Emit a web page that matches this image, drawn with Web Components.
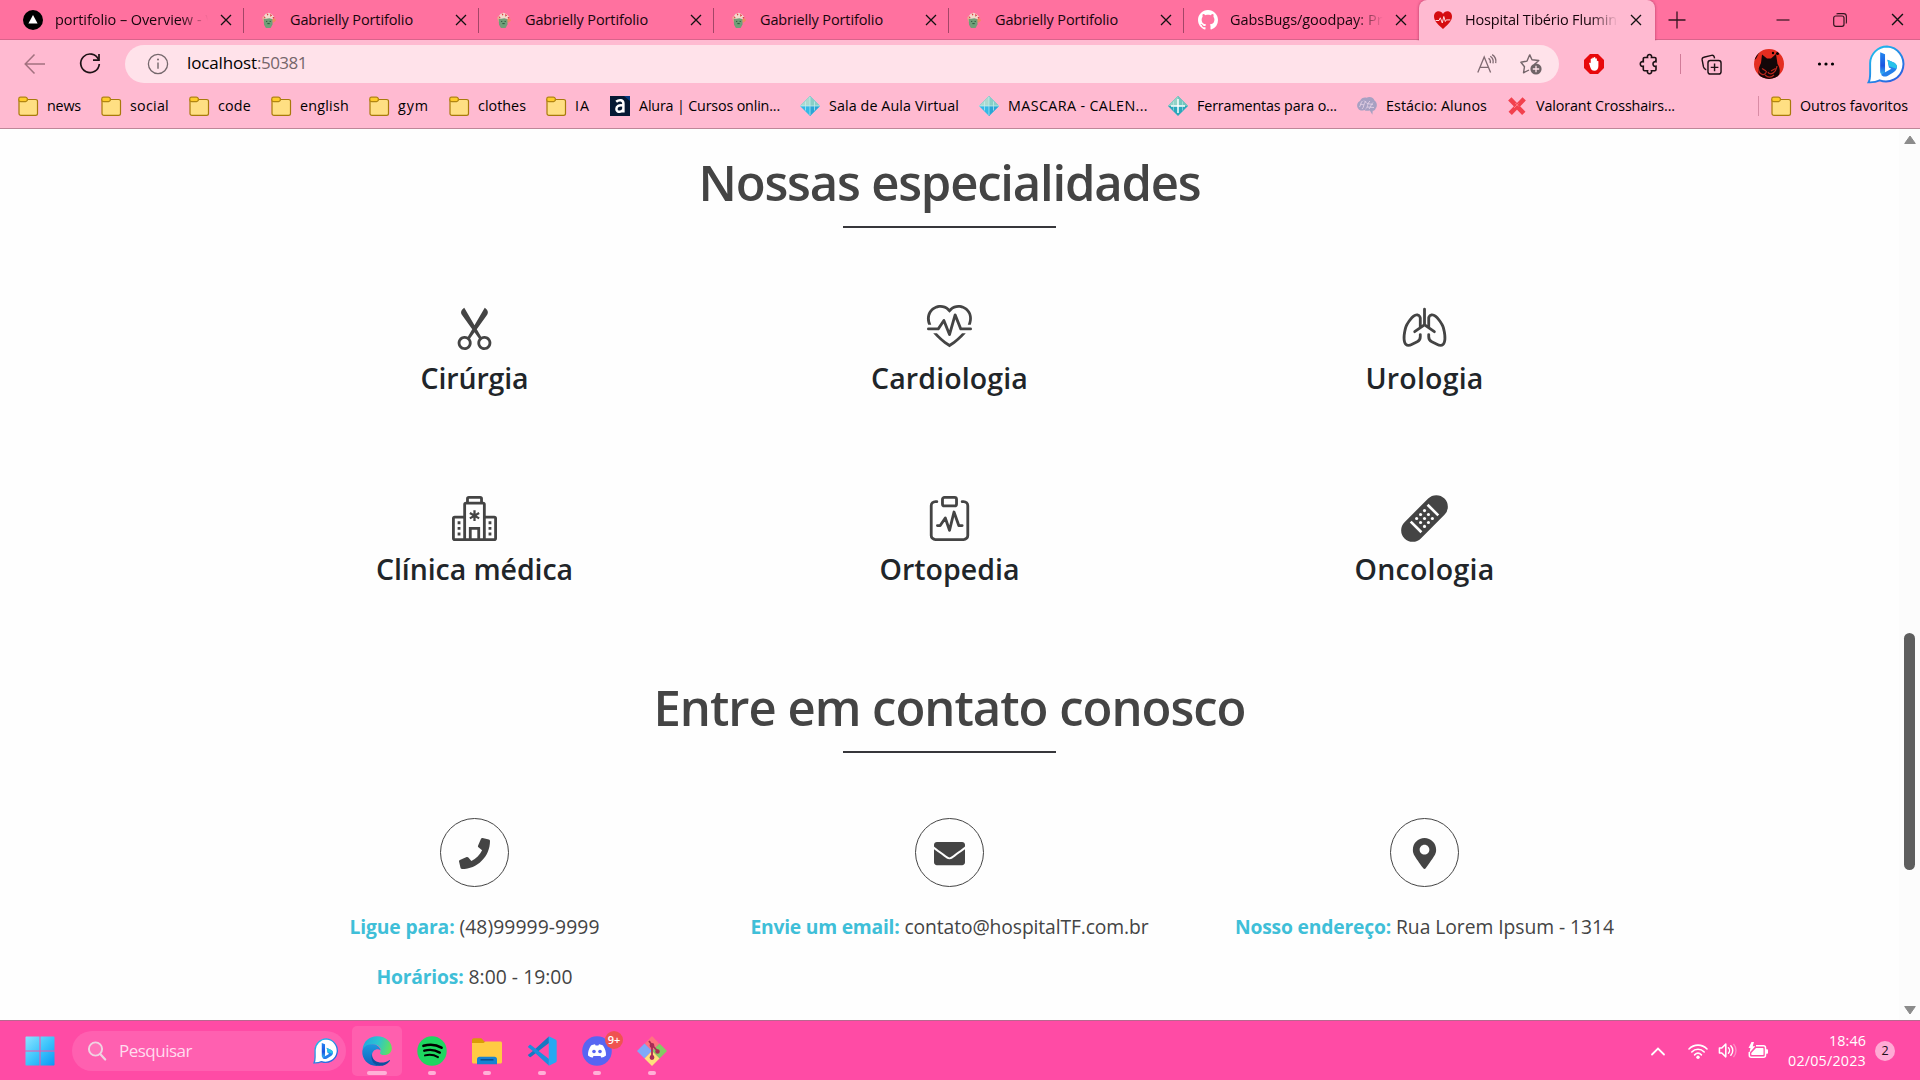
<!DOCTYPE html>
<html lang="pt-BR">
<head>
<meta charset="utf-8">
<title>Hospital Tibério Fluminense</title>
<style>
html,body{margin:0;height:100%;overflow:hidden;background:#fff}
body{font-family:"Open Sans","Noto Sans",sans-serif;color:#000}
</style>
</head>
<body>
<desktop-screen></desktop-screen>
<script>
const ICONS={
vercel:['0 0 20 20','<circle cx="10" cy="10" r="10" fill="#000"/><path d="M10 5l4.6 8.4H5.4z" fill="#fff"/>'],
cactus:['0 0 20 20','<path d="M3.4 7.5c0-2 2-2.200 2.300-.4l.4 2.400 2 .6-.2 2.400-3-.8z" fill="#e8a98c"/><path d="M5 8.500c2.500-1.500 7.500-1.500 9.500.2l-.3 5.600-2 3.600H7.300l-2-3.300z" fill="#6f9f78"/><path d="M14 8.500l2.800-.8 1 2.500-3.200 2.300z" fill="#ef8d5f"/><path d="M5 5.600l2-2.800 3.200-1 3.300 1.600 2.600 3.200-2 1.800-3.200-.8-3.200.5-2.600-.2z" fill="#f3d9cc"/><path d="M8 2.500l2 .6-1 2zM12 3l1.800 1.700-2 1.300zM5 5.500l2 1.200-1.200 1.200zM14 6.500l2.200-.3-.6 2z" fill="#d9363e"/><path d="M7.500 11h1.200M11.200 11h1.200M8.800 13.300h2.500" stroke="#244f38" stroke-width="1"/>'],
github:['0 0 16 16','<path fill="#fff" d="M8 0C3.580 0 0 3.580 0 8c0 3.540 2.290 6.530 5.470 7.590.4.070.55-.17.55-.38 0-.19-.01-.82-.01-1.490-2.010.37-2.530-.49-2.690-.94-.09-.23-.48-.94-.82-1.130-.28-.15-.68-.52-.01-.53.63-.01 1.080.58 1.230.82.72 1.210 1.870.87 2.330.66.070-.52.28-.87.51-1.070-1.780-.2-3.640-.89-3.640-3.950 0-.87.31-1.590.82-2.150-.08-.2-.36-1.020.08-2.120 0 0 .67-.21 2.200.82.64-.18 1.320-.27 2-.27s1.360.09 2 .27c1.530-1.040 2.200-.82 2.200-.82.44 1.100.16 1.920.08 2.120.51.56.82 1.270.82 2.150 0 3.070-1.870 3.750-3.650 3.950.29.25.54.73.54 1.480 0 1.070-.01 1.930-.01 2.200 0 .21.15.46.55.38A8.010 8.010 0 0 0 16 8c0-4.420-3.580-8-8-8z"/>'],
heartfav:['0 0 20 20','<path d="M10 19C3 13 1 10 1 6.300 1 .8 7.800-.6 10 4c2.200-4.600 9-3.200 9 2.300 0 3.700-2 6.700-9 12.700z" fill="#d50c10"/><path d="M2.500 10.500H6l1.300-2.700L9.300 13l1.500-6.500 1.500 5 1-1.600h4" fill="none" stroke="#ffd9dd" stroke-width="1"/>'],
close:['0 0 12 12','<path d="M1 1l10 10M11 1L1 11" fill="none" stroke="#111" stroke-width="1.300"/>'],
plus:['0 0 18 18','<path d="M9 .5v17M.5 9h17" stroke="#33141f" stroke-width="1.300"/>'],
min:['0 0 14 14','<path d="M.5 7h13" stroke="#33141f" stroke-width="1.200"/>'],
restore:['0 0 14 14','<rect x=".7" y="3" width="10.300" height="10.300" rx="2" fill="none" stroke="#33141f" stroke-width="1.200"/><path d="M3.500 1C4 .7 4.500.6 5 .6h5.500c1.700 0 2.900 1.200 2.900 2.900V9c0 .6-.1 1.100-.4 1.500" fill="none" stroke="#33141f" stroke-width="1.100"/>'],
back:['0 0 22 22','<path d="M21 11H1.500M10.500 1.500L1.200 11l9.300 9.500" fill="none" stroke="#a2717f" stroke-width="1.500"/>'],
reload:['0 0 22 22','<path d="M19.500 6.500A9.300 9.300 0 1 0 20.300 11" fill="none" stroke="#1d1115" stroke-width="1.700"/><path d="M20 1v6.200h-6" fill="none" stroke="#1d1115" stroke-width="1.700"/>'],
info:['0 0 22 22','<circle cx="11" cy="11" r="9.600" fill="none" stroke="#74676b" stroke-width="1.300"/><path d="M11 9.500v6.300" stroke="#74676b" stroke-width="1.400"/><circle cx="11" cy="6.500" r="1" fill="#74676b"/>'],
read:['0 0 20 20','<path d="M.8 18.500L7.200 3l6.400 15.500M3 13.300h8.500M11.500 4.200c1.700 1.200 2.200 3.200 1.800 5M13.300 2.200c2.400 1.600 3.300 4.300 2.700 7.200M15.200.6c3 2 4.200 5.200 3.500 8.500" fill="none" stroke="#806a72" stroke-width="1.300"/>'],
star:['0 0 22 22','<path d="M9.500 1.400l2.500 5.300 6.800.8-4.500 4M9 17l-5.500 2.800 1-6.100L.9 9.300 7 8.100l2.500-5.900" fill="none" stroke="#74656a" stroke-width="1.400" stroke-linejoin="round"/><circle cx="16" cy="16" r="5.600" fill="#6f6367"/><path d="M16 12.800v6.400M12.800 16h6.400" stroke="#ffe2ea" stroke-width="1.300"/>'],
hand:['0 0 20 20','<path d="M6 0h8l6 6v8l-6 6H6l-6-6V6z" fill="#e8090c"/><path d="M5.400 10.200c-1-1.300.6-2 1.300-1V5.300c0-1.100 1.400-1.100 1.500 0V4.200c.1-1.100 1.500-1.100 1.600 0v-.4c.1-1 1.500-1 1.600 0V5c.1-.9 1.400-.9 1.500 0v2.400c.1-1 1.400-1 1.500 0V12c0 3-1.500 4.700-4 4.700-2.200 0-3.200-1.200-4-3.300z" fill="#fff"/>'],
puzzle:['0 0 20 20','<path d="M5.500 3.500h3c-1-4 5-4 4 0h3.300c.8 0 1.200.5 1.200 1.200v3c-4-1-4 5.600 0 4.600v3.300c0 .7-.4 1.200-1.200 1.200h-3.300c1 4-5 4-4 0h-3c-.8 0-1.200-.5-1.200-1.200v-3.300c-4 1-4-5.600 0-4.600v-3c0-.7.400-1.200 1.200-1.200z" fill="none" stroke="#1d1115" stroke-width="1.600"/>'],
collections:['0 0 22 22','<path d="M5.500 16.500C3.500 16 3 15 2.600 13.500L1.200 6.200C1 4.600 1.600 3.700 3 3.400l8-2c1.600-.3 2.500.3 2.900 1.800l.3 1.300" fill="none" stroke="#1d1115" stroke-width="1.500"/><rect x="7.300" y="6.800" width="13.700" height="14.200" rx="2.500" fill="none" stroke="#1d1115" stroke-width="1.500"/><path d="M14.200 10v8M10.200 14h8" stroke="#1d1115" stroke-width="1.500"/>'],
avatar:['0 0 30 30','<defs><clipPath id="a"><circle cx="15" cy="15" r="15"/></clipPath></defs><g clip-path="url(#a)"><path fill="#e42d20" d="M0 0h30v30H0z"/><path d="M0 11c3-1 3-4 5-7l2-4H0zM8 5.500l5 4h4l5-4.500 1.500 10C27 20 26 25 23 30H7C3 25 4 20 7 14z" fill="#130608"/><path d="M4.500 19c0 7 7 9 8 3M14 23c2 4 8 1 9-6M8 19.500l4 2.500M21.500 19.500L17 22M11 26c3 3 6 3 9 0" fill="none" stroke="#b9261d" stroke-width="1.200"/><circle cx="19" cy="4" r="1.200"/><circle cx="23.500" cy="4.500" r="1.500"/></g>'],
dots:['0 0 18 18','<circle cx="2.500" cy="9" r="1.600"/><circle cx="9" cy="9" r="1.600"/><circle cx="15.500" cy="9" r="1.600"/>'],
bing:['0 0 40 40','<defs><linearGradient id="b" x1="0" y1="0" x2=".8" y2="1"><stop stop-color="#1cc8ee"/><stop offset="1" stop-color="#2b5ce0"/></linearGradient><linearGradient id="b2" x1="0" y1="0" x2="0" y2="1"><stop stop-color="#2287f0"/><stop offset=".6" stop-color="#1b55e0"/><stop offset="1" stop-color="#35b9f5"/></linearGradient></defs><path d="M20.500 1.500A18 18 0 1 1 13 36.300c-3.500 1.700-7 2.200-11.400 2 1.500-2.500 1.600-5 1.600-9V18.500A17.500 17.500 0 0 1 20.500 1.500z" fill="#fff" stroke="url(#b)" stroke-width="2"/><path d="M13.500 7.500l5 2v19.500l-2 1.500c-1.700 0-3-1.300-3-3z" fill="url(#b2)"/><path d="M21 15l7 3.300c5 3 2.500 8.200-1.500 10.200l-5.500 3.300c-2.500 1.200-5.500.7-6.500-1.500l10.500-6-2.500-1.200z" fill="#247fea"/><path d="M21 15l7 3.300c2.500 1.500 3 4 2.300 6l-7.800-2.500z" fill="#27c3ea"/>'],
folder:['0 0 20 20','<path d="M3 3.500h14.500c1.200 0 2 .7 2 1.800v12.200c0 1.100-.8 1.900-2 1.900H3c-1.200 0-2-.8-2-1.900V3.500z" fill="#ffdf83" stroke="#a87a0b" stroke-width="1.200"/><path d="M2.500 1.200h4.800c1 0 1.700.5 2 1.300.5 1.500-.3 2.700-1.800 3.200H2.700C1.400 5.700.8 5 .8 4V2.800c0-1 .6-1.600 1.700-1.600z" fill="#ffcb2b" stroke="#b18512" stroke-width="1.200"/>'],
alura:['0 0 20 20','<path fill="#051933" d="M0 0h20v20H0z"/><path d="M14 0h6v5z" fill="#073a80"/><path d="M6.200 5.700c3-2.600 7.200-1.800 7.200 1.700v9M13 9.500c-4-.7-6.600.6-6.600 3.400 0 4.200 6.600 3.600 7-.4" fill="none" stroke="#fff" stroke-width="2.500"/>'],
gem:['0 0 20 20','<path d="M10 0l10 10-10 10L0 10z" fill="#34b9e6"/><path d="M10 0l10 10H0z" fill="#88cfc6"/><path d="M10 0v10H0z" fill="#aadad0"/><path d="M10 10h10L10 20z" fill="#2aa5d5"/><path d="M0 10h20M10 1v18M5.500 5.500v9M14.500 5.500v9" stroke="#c9f1f2" stroke-width=".9" opacity=".75"/>'],
gem2:['0 0 20 20','<path d="M10 0l10 10-10 10L0 10z" fill="#2ba7bb"/><path d="M10 0l10 10H0z" fill="#72c6bd"/><path d="M10 0v10H0z" fill="#93d2c6"/><path d="M3 10h14M10 3v14" stroke="#fff" stroke-width="1.500"/><path d="M5.500 5.500v9M14.500 5.500v9" stroke="#c9f1f2" stroke-width=".7" opacity=".7"/>'],
brain:['0 0 20 20','<path d="M1.500 13C-1 10 .3 6 3 5c1-3 4.500-4 6.500-3.200C13-.2 17 2 17.500 4.600c2.700 1.700 3.200 6 1 8.200-.4 1.500-1.500 2-2.800 2l-.3 4-2.600-4.300c-3 .7-4.700.2-5.400-.6-2.500 1-4.900.7-5.900-.9z" fill="#a7a0c2"/><path d="M2.500 11c2-3 1-4.500 3-6M5 13c2.500-2 1-5 4-8M8.500 13c3-2 1-5 4.500-8M12 13c2-1.500 1.500-4.500 4-6.500M3 8l4 1M7 4.500l3 3 6 1M10 11l7 .5" fill="none" stroke="#e2cfe4" stroke-width=".9"/>'],
valorant:['0 0 20 20','<path d="M2.800 2.800l14 14.600M17.200 2.800l-14 14.600" stroke="#f2404d" stroke-width="4.600"/><path d="M8.300 7l3.400 3.400M7 12l4.500-4.600" stroke="#ff8a93" stroke-width=".8"/>'],
up:['0 0 12 10','<path d="M6 1l5.300 7.500H.7z" fill="#8b8b8b" stroke="#8b8b8b" stroke-linejoin="round"/>'],
down:['0 0 12 10','<path d="M6 9L.7 1.500h10.600z" fill="#8b8b8b" stroke="#8b8b8b" stroke-linejoin="round"/>'],
scissors:['0 0 16 16','<path d="M3.500 3.500c-.614-.884-.074-1.962.858-2.500L8 7.226 11.642 1c.932.538 1.472 1.616.858 2.500L8.810 8.610l1.556 2.661a2.500 2.500 0 1 1-.794.637L8 9.730l-1.572 2.177a2.500 2.500 0 1 1-.794-.637L7.190 8.610 3.500 3.500zm2.500 10a1.500 1.500 0 1 0-3 0 1.500 1.500 0 0 0 3 0zm7 0a1.500 1.500 0 1 0-3 0 1.500 1.500 0 0 0 3 0z"/>'],
heart:['0 0 16 16','<path d="m8 2.748-.717-.737C5.600.281 2.514.878 1.400 3.053.918 3.995.78 5.323 1.508 7H.43c-2.128-5.697 4.165-8.830 7.394-5.857.06.055.119.112.176.171a3.120 3.120 0 0 1 .176-.17c3.230-2.974 9.522.159 7.394 5.856h-1.078c.728-1.677.59-3.005.108-3.947C13.486.878 10.400.28 8.717 2.010L8 2.748ZM2.212 10h1.315C4.593 11.183 6.050 12.458 8 13.795c1.949-1.337 3.407-2.612 4.473-3.795h1.315c-1.265 1.566-3.140 3.250-5.788 5-2.648-1.750-4.523-3.434-5.788-5Zm8.252-6.686a.5.5 0 0 0-.945.049L7.921 8.956 6.464 5.314a.5.5 0 0 0-.88-.091L3.732 8H.5a.5.5 0 0 0 0 1H4a.5.5 0 0 0 .416-.223l1.473-2.209 1.647 4.118a.5.5 0 0 0 .945-.049l1.598-5.593 1.457 3.642A.5.5 0 0 0 12 9h3.500a.5.5 0 0 0 0-1h-3.162l-1.874-4.686Z"/>'],
lungs:['0 0 16 16','<path d="M8.500 1.500a.5.5 0 1 0-1 0v5.243L7 7.100V4.720C7 3.770 6.230 3 5.280 3c-.524 0-1.023.27-1.443.592-.431.332-.847.773-1.216 1.229-.736.908-1.347 1.946-1.580 2.480-.176.405-.393 1.160-.556 2.011-.165.857-.283 1.857-.241 2.759.04.867.233 1.790.838 2.330.67.600 1.622.556 2.741-.004l1.795-.897A2.500 2.500 0 0 0 7 11.264V10.500a.5.5 0 0 0-1 0v.764a1.500 1.500 0 0 1-.83 1.342l-1.794.897c-.978.489-1.415.343-1.628.152-.28-.25-.467-.801-.505-1.630-.037-.795.068-1.710.224-2.525.157-.82.357-1.491.491-1.800.19-.438.75-1.400 1.440-2.250.342-.422.703-.799 1.049-1.065.358-.276.639-.385.833-.385a.72.72 0 0 1 .72.72v3.094l-1.790 1.280a.5.5 0 0 0 .58.813L8 7.614l3.210 2.293a.5.5 0 1 0 .58-.814L10 7.814V4.720a.72.72 0 0 1 .72-.72c.194 0 .475.11.833.385.346.266.706.643 1.050 1.066.688.85 1.248 1.811 1.439 2.249.134.309.334.98.491 1.800.156.814.26 1.730.224 2.525-.038.829-.224 1.380-.505 1.630-.213.19-.65.337-1.628-.152l-1.795-.897A1.500 1.500 0 0 1 10 11.264V10.500a.5.5 0 0 0-1 0v.764a2.500 2.500 0 0 0 1.382 2.236l1.795.897c1.120.56 2.070.603 2.741.004.605-.54.798-1.463.838-2.330.042-.902-.076-1.902-.24-2.759-.164-.852-.38-1.606-.558-2.012-.232-.533-.843-1.571-1.579-2.479-.37-.456-.785-.897-1.216-1.229C11.743 3.270 11.244 3 10.720 3 9.770 3 9 3.770 9 4.720V7.100l-.5-.357V1.500Z"/>'],
hospital:['0 0 16 16','<g fill="none" stroke="currentColor"><path d="M5.500 2V1c0-.3.200-.5.500-.5h4c.3 0 .5.200.5.500v1M4.500 15.500V3c0-.3.200-.5.500-.5h6c.3 0 .5.200.5.500v12.500M4.500 7.500H1c-.3 0-.5.200-.5.500v7c0 .3.200.5.500.5h14c.3 0 .5-.2.500-.5V8c0-.3-.2-.5-.5-.5h-3.500M6.500 15.500v-4h3v4M8 15.500"/><path d="M8 5.100v3.800M6.350 6.050l3.300 1.900M9.650 6.050l-3.300 1.900" stroke-width=".8"/></g><path d="M2 9h1v1H2zM2 11h1v1H2zM2 13h1v1H2zM13 9h1v1h-1zM13 11h1v1h-1zM13 13h1v1h-1z"/>'],
clipboard:['0 0 16 16','<g fill="none" stroke="currentColor" stroke-linecap="round" stroke-linejoin="round"><rect x="5.500" y=".5" width="5" height="3" rx=".7"/><path d="M3.500 2H3a1.500 1.500 0 0 0-1.500 1.500V14A1.500 1.500 0 0 0 3 15.500h10a1.500 1.500 0 0 0 1.500-1.500V3.500A1.500 1.500 0 0 0 13 2h-.5M3.700 10.500h1L6.500 7.800 8 12.200l1.600-6.500 1.700 4.800h1.200"/></g>'],
bandaid:['0 0 16 16','<path d="M.9 9.300a4 4 0 1 0 5.800 5.800l8.400-8.400A4 4 0 1 0 9.300.9z" transform="translate(0 0)"/><g stroke="#fff" stroke-width=".95"><path d="M9.100 3.100l3.800 3.800M3.100 9.100l3.800 3.800"/></g><g fill="#fff"><circle cx="8" cy="5.200" r=".55"/><circle cx="9.400" cy="6.600" r=".55"/><circle cx="10.800" cy="8" r=".55"/><circle cx="6.600" cy="6.600" r=".55"/><circle cx="8" cy="8" r=".55"/><circle cx="9.400" cy="9.400" r=".55"/><circle cx="5.200" cy="8" r=".55"/><circle cx="6.600" cy="9.400" r=".55"/><circle cx="8" cy="10.800" r=".55"/></g>'],
phone:['0 0 512 512','<path d="M493.400 24.600l-104-24c-11.300-2.600-22.900 3.300-27.500 13.900l-48 112c-4.200 9.800-1.400 21.300 6.900 28l60.600 49.600c-36 76.700-98.900 140.500-177.200 177.200l-49.600-60.600c-6.800-8.300-18.200-11.100-28-6.900l-112 48C3.900 366.500-2 378.100.6 389.400l24 104C27.100 504.200 36.700 512 48 512c256.100 0 464-207.500 464-464 0-11.200-7.700-20.900-18.600-23.400z"/>'],
mail:['0 0 512 512','<path d="M502.300 190.800c3.900-3.100 9.700-.2 9.700 4.700V400c0 26.500-21.500 48-48 48H48c-26.500 0-48-21.500-48-48V195.600c0-5 5.700-7.800 9.700-4.700 22.400 17.400 52.100 39.500 154.100 113.600 21.100 15.400 56.700 47.800 92.200 47.600 35.700.3 72-32.800 92.300-47.600 102-74.100 131.600-96.300 154-113.700zM256 320c23.200.4 56.600-29.200 73.400-41.400 132.700-96.300 142.800-104.700 173.400-128.700 5.800-4.500 9.200-11.500 9.200-18.900v-19c0-26.500-21.500-48-48-48H48c-26.500 0-48 21.500-48 48v19c0 7.400 3.400 14.300 9.200 18.900 30.600 23.900 40.700 32.400 173.400 128.700 16.800 12.200 50.200 41.800 73.400 41.400z"/>'],
pin:['-64 0 512 512','<path d="M172.268 501.670C26.970 291.031 0 269.413 0 192 0 85.961 85.961 0 192 0s192 85.961 192 192c0 77.413-26.970 99.031-172.268 309.670-9.535 13.774-29.930 13.773-39.464 0zM192 272c44.183 0 80-35.817 80-80s-35.817-80-80-80-80 35.817-80 80 35.817 80 80 80z"/>'],
windows:['0 0 30 30','<defs><linearGradient id="w" x1="0" y1="0" x2="1" y2="1"><stop stop-color="#8fe3ff"/><stop offset=".5" stop-color="#3ec5fb"/><stop offset="1" stop-color="#0c96f5"/></linearGradient></defs><path fill="url(#w)" d="M1.500.5h13v14H.500v-13c0-.6.400-1 1-1zM15.500.5h13c.6 0 1 .4 1 1v13h-14zM.5 15.500h14v14h-13c-.6 0-1-.4-1-1zM15.500 15.500h14v13c0 .6-.4 1-1 1h-13z"/>'],
search:['0 0 20 20','<circle cx="8.500" cy="8" r="6.600" fill="rgba(255,255,255,.12)" stroke="#efd3e2" stroke-width="1.900"/><path d="M13.200 13l5 5.500" stroke="#efd3e2" stroke-width="2.200" stroke-linecap="round"/>'],
edge:['0 0 30 30','<defs><linearGradient id="e1" x1="0" y1=".3" x2="1" y2=".5"><stop stop-color="#22a7de"/><stop offset=".5" stop-color="#2bc3d2"/><stop offset="1" stop-color="#62e25c"/></linearGradient><linearGradient id="e2" x1="0" y1="0" x2="0" y2="1"><stop stop-color="#1d98e0"/><stop offset="1" stop-color="#0f62bd"/></linearGradient></defs><path d="M.5 13.500C1.500 5 7.500.2 15 .2 24 .2 29.800 6 29.800 12c0 4.500-3.300 7-7.300 7-3.500 0-5-1.200-4.300-2.600C20 12 16.500 8.500 12 8.500 6.500 8.500 2 11 .5 13.500z" fill="url(#e1)"/><path d="M.3 15C.8 10.500 6 7.500 11.500 8.300c4 .5 7 3.600 7.100 6.200-2.500-2.500-8.600-1-8.600 5 0 5 4 9.500 9 9.500-2 .8-3 .9-4.500.9C6 29.800-.3 23 .3 15z" fill="url(#e2)"/><path d="M10 18c-.5 6 5 8.500 9.500 8.500 3 0 5.500-.8 7.800-2.300.5-.3.9.2.5.7C25 28.500 21 30 17.500 29.800 10 29 8.500 21.500 10 18z" fill="#0b509f"/>'],
spotify:['0 0 30 30','<circle cx="15" cy="15" r="14.700" fill="#1ed760"/><g fill="none" stroke="#000" stroke-linecap="round"><path d="M6.500 9.800c6-1.700 13-1.100 18 1.900" stroke-width="2.700"/><path d="M7.300 14.700c5.500-1.500 11-.8 15.500 1.900" stroke-width="2.400"/><path d="M8 19.400c4.500-1.200 9-.7 13 1.700" stroke-width="2"/></g>'],
explorer:['0 0 30 30','<path d="M0 4c0-1 .7-1.800 1.800-1.800h7.500L13 6v7H0z" fill="#d99c07"/><path d="M0 7h11.500l2-1.500h15c.9 0 1.500.6 1.500 1.500v19c0 .9-.6 1.500-1.500 1.500h-27C.6 27.500 0 26.900 0 26z" fill="#ffcb43"/><path d="M5 28.300v-5c0-1.500 1-2.500 2.500-2.500h15c1.500 0 2.500 1 2.500 2.500v5z" fill="#1683d2"/><path d="M8.500 23.800h13" stroke="#0b4f8c" stroke-width="1.500"/>'],
vscode:['0 0 30 30','<path d="M21.800.5L6.500 14.500.8 19l1.500 1.800c.5.500 1.200.5 1.800 0L22 7z" fill="#1579c2"/><path d="M21.800 29.500L6.500 15.500.8 11l1.500-1.800c.5-.5 1.200-.5 1.800 0L22 23z" fill="#1b8fdd"/><path d="M21.800.3l6.700 3.200c.8.300 1.200 1 1.200 1.800v19.400c0 .8-.4 1.500-1.200 1.800l-6.700 3.200z" fill="#28a8f2"/>'],
discord:['0 0 30 30','<circle cx="15" cy="15" r="14.800" fill="#5765f2"/><path d="M9 9.500c1.500-.7 2.500-1 4-1.200l.6 1.100h2.800l.6-1.100c1.500.2 2.500.5 4 1.200 2.200 3.300 3.200 6.500 3 10-1.500 1.200-2.900 1.800-4.500 2.200l-1-1.700h-7l-1 1.700C8.900 21.300 7.500 20.700 6 19.500c-.2-3.500.8-6.700 3-10z" fill="#fff"/><circle cx="12" cy="15.500" r="1.800" fill="#5765f2"/><circle cx="18" cy="15.500" r="1.800" fill="#5765f2"/>'],
git:['0 0 30 30','<path d="M15 0l7.200 7.500L15 15 7.800 7.500z" fill="#ff7480"/><path d="M7.500 7.500L15 15l-7.500 7.500L0 15z" fill="#7fa9f7"/><path d="M22.500 7.500L30 15l-7.500 7.500L15 15z" fill="#83cb63"/><path d="M15 15l7.500 7.500L15 30l-7.500-7.500z" fill="#ffe07d"/><g stroke="#a92d55" stroke-width="1.800" fill="#a92d55"><path d="M12 5l3 4v13M15 9l5.500 6" fill="none"/><circle cx="15" cy="9.500" r="1.500"/><circle cx="20.500" cy="15.500" r="1.400"/><circle cx="15" cy="21.500" r="1.500"/></g>'],
caret:['0 0 16 16','<path d="M2 11.500l6-6 6 6" fill="none" stroke="#fff" stroke-width="1.800" stroke-linecap="round"/>'],
wifi:['0 0 20 20','<g fill="none" stroke="#fff" stroke-width="1.600" stroke-linecap="round"><path d="M1 8c5-5.200 13-5.200 18 0M3.800 11c3.500-3.600 8.900-3.600 12.400 0M6.600 13.900c2-2 4.800-2 6.800 0"/></g><circle cx="10" cy="16.300" r="1.700" fill="#fff"/>'],
sound:['0 0 20 20','<path d="M1.500 7.300H4l4.200-4v13.400L4 12.700H1.500z" fill="none" stroke="#fff" stroke-width="1.600" stroke-linejoin="round"/><path d="M11 7.200c1.500 1.500 1.500 4.100 0 5.600M13.500 5c2.700 2.800 2.700 7.200 0 10" fill="none" stroke="#fff" stroke-width="1.500" stroke-linecap="round"/><path d="M16.300 3c3.500 4 3.500 10 0 14" fill="none" stroke="#fff" opacity=".35" stroke-width="1.500"/>'],
battery:['0 0 20 20','<path d="M8 4.700h7.500c1.200 0 2 .8 2 2v7.600c0 1.200-.8 2-2 2H3.300c-1.200 0-2-.8-2-2V11" fill="none" stroke="#fff" stroke-width="1.500"/><path d="M8 6.900h6.800c.4 0 .7.300.7.700v5.800c0 .4-.3.7-.7.7H4.200c-.5 0-.9-.4-.9-.9V12zM18 8.300h1.200c.5 0 .8.400.8.800v2.800c0 .4-.3.800-.8.800H18z" fill="#fff"/><path d="M3.500 1L.5 7h2L1.300 12 7.300 5.300H4.700L6 1z" fill="#fff"/>']
};
function comp(name,css,html,setup){
  customElements.define(name,class extends HTMLElement{
    connectedCallback(){
      if(this.shadowRoot)return;
      const r=this.attachShadow({mode:'open'});
      r.innerHTML='<style>:host{display:block;box-sizing:border-box}*{box-sizing:border-box}'+css+'</style>'+(typeof html==='function'?html(this):html);
      if(setup)setup(this,r);
    }
  });
}
const ic=(n,s)=>`<ui-icon name="${n}" size="${s}"></ui-icon>`;
const ft=(w,t)=>`<fit-text w="${w}">${t}</fit-text>`;

comp('ui-icon',':host{flex:none;display:block}svg{display:block;overflow:visible;fill:currentColor}',e=>{
  const s=e.getAttribute('size'),[v,b]=ICONS[e.getAttribute('name')];
  return `<svg width="${s}" height="${s}" viewBox="${v}">${b.replace(/^<path (?!.*fill)/,'<path ')}</svg>`;
});
comp('browser-tab',`:host{width:235px;height:39px;flex:none;display:flex;align-items:center;padding:1px 0 0 14px;font-size:14.500px;position:relative}
:host(:not([active]):not([nosep]))::after{content:"";position:absolute;right:0;top:8px;width:1px;height:25px;background:#a34667}
:host([active]){background:#ffbad1;height:41px;padding-bottom:2px;border-radius:8px 8px 0 0;width:236px;box-shadow:0 0 3px rgba(120,20,60,.6);clip-path:inset(-4px -4px 0 -4px)}
.i{width:20px;display:flex;justify-content:center}
.t{margin-left:12px;width:153px;overflow:hidden;white-space:nowrap;height:26px;line-height:26px;display:flex;gap:4px}
:host([fade]) .t{-webkit-mask-image:linear-gradient(90deg,#000 125px,transparent 153px)}
.c{margin-left:12px}`,e=>`<div class="i">${ic(e.getAttribute('icon'),e.getAttribute('is')||20)}</div><div class="t"><slot></slot></div><div class="c">${ic('close',12)}</div>`);
comp('tab-strip',`:host{height:40px;background:#ff719f;display:flex;padding-left:9px;border-bottom:1px solid #d9648b;color:#17060c}
.r{display:flex;align-items:center;height:39px;flex:1}
.p{margin-left:13px}.a{margin-left:90px}.b{margin-left:44px}.d{margin-left:51px}`,
`<browser-tab icon="vercel" fade>${ft(138,'portifolio – Overview')}<span>- V</span></browser-tab>`+
`<browser-tab icon="cactus" is="19">${ft(123,'Gabrielly Portifolio')}</browser-tab>`.repeat(4)+
`<browser-tab icon="github" nosep fade>${ft(134,'GabsBugs/goodpay:')}<span>Pro</span></browser-tab>
<browser-tab icon="heartfav" active fade>${ft(160,'Hospital Tibério Flumine')}</browser-tab>
<div class="r"><div class="p">${ic('plus',18)}</div><div class="a">${ic('min',14)}</div><div class="d" style="margin-left:43px">${ic('restore',14)}</div><div class="d" style="margin-left:44px">${ic('close',13)}</div></div>`);
comp('address-row',`:host{height:48px;display:flex;align-items:center;padding-left:24px}
.f{margin-left:24px;width:1434px;height:38px;border-radius:19px;background:#ffe2ea;display:flex;align-items:center;padding-left:22px;font-size:17px}
.u{margin-left:18px;display:flex;line-height:36px;height:38px}.g{color:#75666b;display:flex}
.s{width:1px;height:20px;background:#d17b98;margin:0 20px 0 21px}`,
`${ic('back',22)}<div style="width:33px"></div>${ic('reload',22)}<div class="f">${ic('info',22)}<div class="u">${ft(70,'localhost')}<span class="g">${ft(50,':50381')}</span></div><div style="width:1170px;flex:none"></div>${ic('read',20)}<div style="width:23px;flex:none"></div>${ic('star',22)}</div>
<div style="width:25px"></div>${ic('hand',20)}<div style="width:35px"></div>${ic('puzzle',20)}<div class="s"></div>${ic('collections',21)}<div style="width:32px"></div>${ic('avatar',30)}<div style="width:33px"></div>${ic('dots',18)}<div style="width:32px"></div>${ic('bing',39)}`);
comp('book-mark',`:host{display:flex;align-items:center;margin-right:20px;flex:none}.x{margin-left:9px;line-height:24px;white-space:nowrap}`,
 e=>`${ic(e.getAttribute('icon')||'folder',20)}<div class="x"><slot></slot></div>`);
const bm=(i,w,t)=>`<book-mark icon="${i}">${ft(w,t)}</book-mark>`;
comp('bookmark-bar',`:host{height:40px;display:flex;align-items:center;padding:0 0 4px 18px;font-size:14.300px}
.sp{flex:1}.s{width:1px;height:20px;background:#d98ca5;margin-right:12px}book-mark:last-of-type{margin-right:12px}`,
[['folder',34,'news'],['folder',39,'social'],['folder',33,'code'],['folder',49,'english'],['folder',31,'gym'],['folder',48,'clothes'],['folder',15,'IA'],['alura',141,'Alura | Cursos onlin...'],['gem',130,'Sala de Aula Virtual'],['gem',140,'MASCARA - CALEN...'],['gem2',140,'Ferramentas para o...'],['brain',101,'Estácio: Alunos'],['valorant',139,'Valorant Crosshairs...']].map(a=>bm(...a)).join('')+`<div class="sp"></div><div class="s"></div>`+bm('folder',108,'Outros favoritos'));
comp('browser-chrome',`:host{height:129px;background:#ffbad1;border-bottom:1px solid #bd8798;flex:none}`,`<tab-strip></tab-strip><address-row></address-row><bookmark-bar></bookmark-bar>`);

comp('section-title',`:host{display:flex;flex-direction:column;align-items:center;color:#444;font-size:49px;font-weight:600;line-height:60px}
hr{border:0;margin:14px 0 0;height:2px;width:213px;background:#37373b}`,`<slot></slot><hr>`);
comp('specialty-card',`:host{width:475px;height:191px;display:flex;flex-direction:column;align-items:center;color:#444}
.l{color:#212529;font-weight:600;font-size:28.500px;line-height:36px;margin-top:10px}`,e=>`${ic(e.getAttribute('icon'),45)}<div class="l"><slot></slot></div>`);
comp('contact-card',`:host{width:475px;display:flex;flex-direction:column;align-items:center;color:#444;font-size:19.300px}
.o{width:69px;height:69px;border:1px solid #444;border-radius:50%;display:flex;align-items:center;justify-content:center;margin-bottom:25px;padding-top:1px}`,
e=>`<div class="o">${ic(e.getAttribute('icon'),31)}</div><slot></slot>`);
comp('info-line',`:host{display:flex;gap:5px;height:30px;line-height:30px;margin-bottom:20px}::slotted([slot=k]){font-weight:700;color:#3fbfd8}`,`<slot name="k"></slot><slot></slot>`);
const sc=(i,w,t)=>`<specialty-card icon="${i}">${ft(w,t)}</specialty-card>`;
const il=(w,k,x,t)=>`<info-line><fit-text slot="k" w="${w}">${k}</fit-text>${ft(x,t)}</info-line>`;
comp('hospital-page',`:host{flex:1;background:#fefefe;padding-top:23px;height:891px;overflow:hidden}
.g{display:grid;grid-template-columns:repeat(3,475px);justify-content:center;padding-top:77px}
.c{padding-top:65px}.h{margin-top:-10px}`,
`<section-title>${ft(502,'Nossas especialidades')}</section-title>
<div class="g">${sc('scissors',108,'Cirúrgia')}${sc('heart',157,'Cardiologia')}${sc('lungs',118,'Urologia')}${sc('hospital',197,'Clínica médica')}${sc('clipboard',140,'Ortopedia')}${sc('bandaid',140,'Oncologia')}</div>
<section-title class="h">${ft(592,'Entre em contato conosco')}</section-title>
<div class="g c"><contact-card icon="phone">${il(105,'Ligue para:',140,'(48)99999-9999')}${il(87,'Horários:',104,'8:00 - 19:00')}</contact-card>
<contact-card icon="mail">${il(149,'Envie um email:',244,'contato@hospitalTF.com.br')}</contact-card>
<contact-card icon="pin">${il(156,'Nosso endereço:',218,'Rua Lorem Ipsum - 1314')}</contact-card></div>`);
comp('scroll-rail',`:host{width:21px;background:#fcfcfc;display:flex;flex-direction:column;align-items:center;padding:5px 0 4px}
.t{margin-top:487px;width:11px;height:237px;border-radius:6px;background:#5e5e5e}.s{flex:1}`,`${ic('up',12)}<div class="t"></div><div class="s"></div>${ic('down',12)}`);

comp('task-app',`:host{width:50px;height:50px;display:flex;flex-direction:column;align-items:center;padding-top:10px;position:relative;border-radius:5px}
:host([on]){background:#ff5fae}i{margin-top:5px;width:8px;height:4px;border-radius:2px;background:#ffb1d7}:host([on]) i{width:20px}
b{position:absolute;left:33px;top:5px;width:18px;height:18px;border-radius:9px;background:#ef5350;color:#fff;font:600 11px/17px "Open Sans",sans-serif;text-align:center}`,
e=>`${ic(e.getAttribute('icon'),30)}<i></i>${e.hasAttribute('badge')?`<b>${e.getAttribute('badge')}</b>`:''}`);
comp('task-bar',`:host{height:60px;flex:none;background:#ff4ba5;border-top:1px solid #b8688f;display:flex;align-items:center;padding-left:25px;color:#fff}
.q{margin-left:17px;width:274px;height:40px;border-radius:20px;background:#ff60b0;display:flex;align-items:center;padding:0 7px 0 15px;color:#ffdcee;font-size:17px}
.q fit-text{margin-left:12px;margin-right:auto;line-height:38px}.a{display:flex;gap:5px;margin-left:6px}
.y{margin-left:auto;display:flex;align-items:center}.k{width:85px;margin-left:13px;display:flex;flex-direction:column;align-items:flex-end;font-size:14.300px;line-height:20px}
.n{margin:0 25px 0 9px;width:20px;height:20px;border-radius:50%;background:#ffabd5;color:#20101a;font-size:12.500px;line-height:19px;text-align:center}`,
`${ic('windows',30)}<div class="q">${ic('search',20)}${ft(73,'Pesquisar')}${ic('bing',26)}</div>
<div class="a"><task-app icon="edge" on></task-app><task-app icon="spotify"></task-app><task-app icon="explorer"></task-app><task-app icon="vscode"></task-app><task-app icon="discord" badge="9+"></task-app><task-app icon="git"></task-app></div>
<div class="y">${ic('caret',16)}<div style="width:22px"></div>${ic('wifi',20)}<div style="width:10px"></div>${ic('sound',19)}<div style="width:11px"></div>${ic('battery',20)}<div class="k">${ft(37,'18:46')}${ft(78,'02/05/2023')}</div><div class="n">2</div></div>`);
comp('desktop-screen',`:host{width:1920px;height:1080px;display:flex;flex-direction:column;overflow:hidden}.m{flex:1;display:flex;min-height:0}`,`<browser-chrome></browser-chrome><div class="m"><hospital-page></hospital-page><scroll-rail></scroll-rail></div><task-bar></task-bar>`);
/* Text run whose tracking is set so that it fills the given advance width. */
comp('fit-text',`:host{display:block;flex:none;white-space:nowrap}span{display:inline-block}`,'<span><slot></slot></span>',(e,r)=>{
  const s=r.querySelector('span'),w=+e.getAttribute('w');
  e.style.width=w+'px';
  s.style.letterSpacing=((w-s.getBoundingClientRect().width)/e.textContent.length)+'px';
});
</script>
</body>
</html>
